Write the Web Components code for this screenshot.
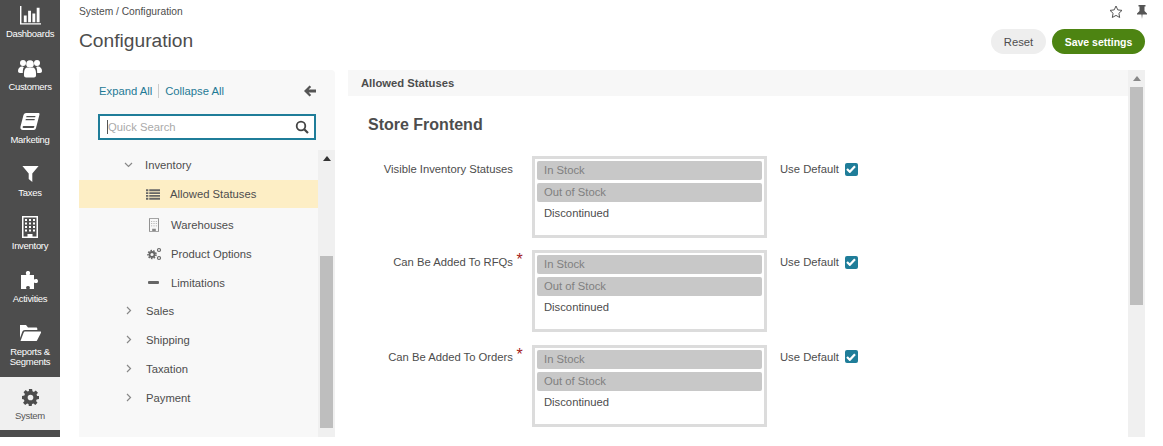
<!DOCTYPE html>
<html>
<head>
<meta charset="utf-8">
<title>Configuration</title>
<style>
  html, body { margin: 0; height: 446px; overflow: hidden; background: #fff; }
  body { font: 12px "Liberation Sans", Arial, sans-serif; color: #4d4d4d; }
</style>
</head>
<body>
<app-shell>
  <side-nav slot="nav">
    <nav-item><svg slot="icon" width="23" height="21" viewBox="0 0 24 22"><path fill="#fff" d="M1 1h1.500v18H23v1.500H1zM5 11h3v7H5zM9.500 6h3v12h-3zM14 9h3v9h-3zM18.500 3h3v15h-3z"/></svg>Dashboards</nav-item>
    <nav-item><svg slot="icon" width="24" height="20" viewBox="0 0 24 20"><g fill="#fff"><circle cx="5" cy="5" r="3"/><circle cx="19" cy="5" r="3"/><circle cx="12" cy="6" r="3.800"/><path d="M0 13c0-3 2-4.500 4-4.500 1 0 1.500.5 2 .5-.8 1-1.200 2.500-1.200 6H2c-1.200 0-2-.8-2-2zM24 13c0-3-2-4.500-4-4.500-1 0-1.500.5-2 .5.800 1 1.200 2.500 1.200 6H22c1.200 0 2-.8 2-2zM6 15c0-3.500 1.500-5.500 3.500-5.500 1 .7 4 .7 5 0 2 0 3.500 2 3.500 5.500v2.500c0 1-1 2-2 2H8c-1 0-2-1-2-2z"/></g></svg>Customers</nav-item>
    <nav-item><svg slot="icon" width="20" height="19" viewBox="0 0 20 19"><path fill="#fff" d="M6 1h12.500c.8 0 1.200.6 1 1.400L16 16c-.3 1.200-1 2-2.200 2H3c-2 0-3-1.500-2.500-3.500L3.500 3C4 1.800 5 1 6 1zM6.500 4l-.3 1.200h9L15.500 4zM5.800 7l-.3 1.200h9l.3-1.200zM3.500 14c-1 0-1.300 2 0 2h9.700c.5 0 .8-.4 1-1l.2-1z"/></svg>Marketing</nav-item>
    <nav-item><svg slot="icon" width="17" height="18" viewBox="0 0 18 20"><path fill="#fff" d="M0 1h18L11 9.500V19L7 15.500V9.500z"/></svg>Taxes</nav-item>
    <nav-item><svg slot="icon" width="16" height="22" viewBox="0 0 16 22"><path fill="#fff" fill-rule="evenodd" d="M0 0h16v22H0zM1.500 1.500v19h4V18h5v2.500h4v-19zM3 3h2v2H3zM7 3h2v2H7zM11 3h2v2h-2zM3 6.500h2v2H3zM7 6.500h2v2H7zM11 6.500h2v2h-2zM3 10h2v2H3zM7 10h2v2H7zM11 10h2v2h-2zM3 13.500h2v2H3zM7 13.500h2v2H7zM11 13.500h2v2h-2z"/></svg>Inventory</nav-item>
    <nav-item><svg slot="icon" width="20" height="20" viewBox="0 0 20 20"><path fill="#fff" d="M1 5h5.500C5.500 3.500 5.500 1 8 1s2.500 2.500 1.500 4H14v4.500c1.500-1 4-1 4 1.500s-2.500 2.500-4 1.500V19H9.500c.8-1.500.5-3-1.500-3s-2.300 1.500-1.500 3H1z"/></svg>Activities</nav-item>
    <nav-item tall><svg slot="icon" width="22" height="18" viewBox="0 0 22 18"><path fill="#fff" d="M1 1h6l2 2.500h8c.8 0 1.300.5 1.300 1.200V6H6c-1.500 0-2.300.7-2.800 2L1 14zM6 7.500h15.500c.5 0 .8.400.6 1L18 16.500c-.2.400-.5.500-1 .5H1.500l3-8c.3-.8.800-1.500 1.500-1.500z"/></svg>Reports &amp;<br>Segments</nav-item>
    <nav-item active><svg slot="icon" width="17" height="17" viewBox="0 0 18 18"><path fill="#4d4d4d" fill-rule="evenodd" d="M7.300 0h3.400l.4 2.500 1.500.6 2-1.500 2.300 2.300-1.500 2 .6 1.500L18 7.300v3.400l-2.500.4-.6 1.500 1.500 2-2.300 2.300-2-1.500-1.500.6-.4 2.500H7.300l-.4-2.500-1.500-.6-2 1.500-2.300-2.300 1.500-2-.6-1.500L0 10.700V7.300l2.500-.4.6-1.500-1.500-2 2.300-2.300 2 1.500 1.500-.6zM9 6a3 3 0 1 0 0 6 3 3 0 0 0 0-6z"/></svg>System</nav-item>
  </side-nav>

  <page-header slot="header" crumb="System / Configuration" heading="Configuration"></page-header>

  <tree-panel slot="tree">
    <tree-node kind="open">Inventory</tree-node>
    <tree-node kind="leaf" selected>
      <svg slot="icon" style="margin-left:1px" width="14" height="11" viewBox="0 0 15 11"><path fill="#666" d="M0 0h2.500v2H0zM3.500 0H15v2H3.500zM0 3h2.500v2H0zM3.500 3H15v2H3.500zM0 6h2.500v2H0zM3.500 6H15v2H3.500zM0 9h2.500v2H0zM3.500 9H15v2H3.500z"/></svg>Allowed Statuses</tree-node>
    <tree-node kind="leaf">
      <svg slot="icon" style="margin-left:4px" width="10" height="14" viewBox="0 0 11 15"><path fill="#888" fill-rule="evenodd" d="M0 0h11v15H0zM1 1v13h2.500v-2.500h4V14H10V1zM2.500 3h1v1h-1zM5 3h1v1H5zM7.500 3h1v1h-1zM2.500 5.500h1v1h-1zM5 5.500h1v1H5zM7.500 5.500h1v1h-1zM2.500 8h1v1h-1zM5 8h1v1H5zM7.500 8h1v1h-1z"/></svg>Warehouses</tree-node>
    <tree-node kind="leaf">
      <svg slot="icon" style="margin-left:2px" width="15" height="14" viewBox="0 0 15 14"><g fill="none" stroke="#666"><circle cx="5" cy="7.500" r="2.500" stroke-width="1.800"/><circle cx="5" cy="7.500" r="4" stroke-width="1.500" stroke-dasharray="1.600 1.200"/><circle cx="12" cy="3" r="1.500" stroke-width="1.200"/><circle cx="12" cy="11" r="1.500" stroke-width="1.200"/></g></svg>Product Options</tree-node>
    <tree-node kind="leaf" tight>
      <svg slot="icon" style="margin-left:3px" width="11" height="3" viewBox="0 0 11 3"><rect width="11" height="3" rx="1" fill="#666"/></svg>Limitations</tree-node>
    <tree-node kind="closed">Sales</tree-node>
    <tree-node kind="closed">Shipping</tree-node>
    <tree-node kind="closed">Taxation</tree-node>
    <tree-node kind="closed">Payment</tree-node>
  </tree-panel>

  <settings-panel slot="panel" section="Allowed Statuses" heading="Store Frontend">
    <status-row label="Visible Inventory Statuses"></status-row>
    <status-row label="Can Be Added To RFQs" required></status-row>
    <status-row label="Can Be Added To Orders" required></status-row>
  </settings-panel>
</app-shell>

<script>
class AppShell extends HTMLElement {
  constructor() {
    super();
    this.attachShadow({mode: 'open'}).innerHTML = `<style>
      :host { display: grid; grid-template-columns: 60px 1fr; height: 446px; overflow: hidden; }
      .main { padding: 0 18px 0 19px; min-width: 0; }
      .content { display: flex; gap: 13px; height: 367px; }
    </style>
    <slot name="nav"></slot>
    <div class="main">
      <slot name="header"></slot>
      <div class="content">
        <slot name="tree"></slot>
        <slot name="panel"></slot>
      </div>
    </div>`;
  }
}

class SideNav extends HTMLElement {
  constructor() {
    super();
    this.attachShadow({mode: 'open'}).innerHTML = `<style>
      :host { display: block; height: 437px; background: #4d4d4d; overflow: hidden; }
      .list { margin-top: -5px; }
    </style>
    <div class="list"><slot></slot></div>`;
  }
}

class NavItem extends HTMLElement {
  constructor() {
    super();
    this.attachShadow({mode: 'open'}).innerHTML = `<style>
      :host { display: block; min-height: 53px; box-sizing: border-box; text-align: center;
        color: #fff; font-size: 9.500px; line-height: 10px; letter-spacing: -.3px; }
      :host([tall]) { min-height: 64px; }
      :host([active]) { background: #f0f0f0; color: #555; }
      .icon { display: flex; height: 22px; padding-top: 9px; margin-bottom: 3px; align-items: center; justify-content: center; }
    </style>
    <div class="icon"><slot name="icon"></slot></div>
    <slot></slot>`;
  }
}

class PageHeader extends HTMLElement {
  constructor() {
    super();
    this.attachShadow({mode: 'open'}).innerHTML = `<style>
      :host { display: flex; justify-content: space-between; height: 70px; }
      .crumb { font-size: 10.250px; line-height: 12px; padding-top: 6px; color: #4d4d4d; }
      h1 { margin: 14px 0 0; font-size: 19.200px; line-height: 18px; font-weight: normal; color: #4d4d4d; }
      .side { display: flex; flex-direction: column; align-items: flex-end; }
      .tools { display: flex; gap: 14px; height: 17px; padding-top: 3px; margin: 0 -2px 9px 0; align-items: center; }
      .buttons { display: flex; gap: 6px; }
      button { border: 0; height: 25px; border-radius: 13px; font: 11.250px "Liberation Sans", Arial, sans-serif; padding: 0; }
      .reset { width: 55px; background: #eee; color: #4d4d4d; }
      .save { width: 93px; background: #4d8412; color: #fff; font-weight: bold; font-size: 10.500px; }
    </style>
    <div>
      <div class="crumb">${this.getAttribute('crumb')}</div>
      <h1>${this.getAttribute('heading')}</h1>
    </div>
    <div class="side">
      <div class="tools">
        <svg width="14" height="14" viewBox="0 0 14 14"><path fill="none" stroke="#555" d="M7 1l1.800 3.900 4.200.5-3.100 2.900.8 4.200L7 10.400 3.300 12.500l.8-4.200L1 5.400l4.200-.5z"/></svg>
        <svg width="10" height="14" viewBox="0 0 10 14"><path fill="#555" d="M1.500 0h7v1.500H7.500V6L10 8.500V9.500H5.500L5 14l-.5-4.500H0V8.500L2.500 6V1.500h-1z"/></svg>
      </div>
      <div class="buttons">
        <button class="reset">Reset</button>
        <button class="save">Save settings</button>
      </div>
    </div>`;
  }
}

class FakeScrollbar extends HTMLElement {
  constructor() {
    super();
    const top = this.getAttribute('thumb-top');
    const height = this.getAttribute('thumb-height');
    this.attachShadow({mode: 'open'}).innerHTML = `<style>
      :host { display: block; width: 17px; flex: none; background: #f0f0f0; }
      .arrow { width: 0; margin: 6px auto 0; border: 4px solid transparent; border-top: 0; border-bottom: 5px solid ${this.getAttribute('arrow') || '#333'}; }
      .thumb { width: 13px; margin: 0 2px; background: #bebebe; }
    </style>
    <div class="arrow"></div>
    <div class="thumb" style="margin-top:${top}px;height:${height}px"></div>`;
  }
}

class TreePanel extends HTMLElement {
  constructor() {
    super();
    this.attachShadow({mode: 'open'}).innerHTML = `<style>
      :host { display: flex; flex-direction: column; width: 256px; flex: none; height: 367px;
        background: #f8f8f8; border-radius: 4px 4px 0 0; }
      .top { padding: 14px 19px 0 19px; height: 66px; }
      .links { display: flex; align-items: center; height: 14px; padding-left: 1px; color: #1f7a96; font-size: 11.250px; }
      .links i { width: 1px; height: 14px; background: #ccc; margin: 0 6px; }
      .links svg { margin-left: auto; }
      .search { display: flex; align-items: center; height: 22px; margin-top: 16px; border: 2px solid #1f7d99;
        background: #fff; padding: 0 5px 0 7px; color: #aaa; font-size: 11.250px; }
      .search span { border-left: 1px solid #555; line-height: 14px; flex: 1; }
      .body { display: flex; flex: 1; min-height: 0; }
      .rows { flex: 1; }
    </style>
    <div class="top">
      <div class="links">Expand All<i></i>Collapse All
        <svg width="12" height="12" viewBox="0 0 13 12"><path fill="#555" d="M6 0l1.800 1.800L5 4.500h8v3H5l2.800 2.700L6 12 0 6z"/></svg>
      </div>
      <div class="search"><span>Quick Search</span>
        <svg width="14" height="14" viewBox="0 0 14 14"><circle cx="6" cy="6" r="4.300" fill="none" stroke="#444" stroke-width="1.800"/><path stroke="#444" stroke-width="2.200" d="M9.200 9.200L13 13"/></svg>
      </div>
    </div>
    <div class="body">
      <div class="rows"><slot></slot></div>
      <fake-scrollbar thumb-top="95" thumb-height="172"></fake-scrollbar>
    </div>`;
  }
}

class TreeNode extends HTMLElement {
  constructor() {
    super();
    const kind = this.getAttribute('kind');
    const chevron = kind == 'open'
      ? '<svg width="9" height="6" viewBox="0 0 9 6"><path fill="none" stroke="#888" stroke-width="1.200" d="M1 1l3.500 3.500L8 1"/></svg>'
      : '<svg width="6" height="9" viewBox="0 0 6 9"><path fill="none" stroke="#888" stroke-width="1.200" d="M1 1l3.500 3.500L1 8"/></svg>';
    this.attachShadow({mode: 'open'}).innerHTML = `<style>
      :host { display: flex; align-items: center; height: 29px; color: #4d4d4d; font-size: 11.250px; }
      :host([kind="open"]) { padding-left: 45px; }
      :host([kind="closed"]) { padding-left: 47px; }
      :host([kind="leaf"]) { padding-left: 66px; }
      :host([selected]) { background: #fdeec5; height: 28px; margin-top: 1px; margin-bottom: 2px; }
      :host([tight]) { margin-bottom: -1px; }
      .mark { display: flex; align-items: center; justify-content: flex-start; }
      :host([kind="open"]) .mark { width: 21px; }
      :host([kind="closed"]) .mark { width: 20px; }
      :host([kind="leaf"]) .mark { width: 26px; }
      :host([selected]) .mark { width: 25px; }
    </style>
    <span class="mark">${kind == 'leaf' ? '<slot name="icon"></slot>' : chevron}</span>
    <span><slot></slot></span>`;
  }
}

class SettingsPanel extends HTMLElement {
  constructor() {
    super();
    this.attachShadow({mode: 'open'}).innerHTML = `<style>
      :host { display: flex; flex: 1; min-width: 0; height: 367px; overflow: hidden; }
      .inner { flex: 1; min-width: 0; }
      .section { height: 26px; line-height: 26px; padding-left: 13px; background: #f7f7f7; font-weight: bold; font-size: 11.250px; color: #4d4d4d; }
      h2 { margin: 0; padding: 19px 0 0 20px; height: 41px; font-size: 16px; line-height: 20px; color: #4d4d4d; }
      .rows { display: flex; flex-direction: column; gap: 12.400px; }
    </style>
    <div class="inner">
      <div class="section">${this.getAttribute('section')}</div>
      <h2>${this.getAttribute('heading')}</h2>
      <div class="rows"><slot></slot></div>
    </div>
    <fake-scrollbar thumb-top="6" thumb-height="218" arrow="#888"></fake-scrollbar>`;
  }
}

class StatusRow extends HTMLElement {
  constructor() {
    super();
    const required = this.hasAttribute('required');
    this.attachShadow({mode: 'open'}).innerHTML = `<style>
      :host { display: flex; height: 82px; font-size: 11.250px; color: #4d4d4d; }
      .label { width: 165px; text-align: right; padding-top: 6px; line-height: 14px; position: relative; flex: none; }
      :host([required]) .label { padding-top: 5px; }
      .star { position: absolute; left: 168.500px; top: 3px; color: #a51c1c; font-size: 16px; }
      .select { width: 235px; box-sizing: border-box; margin-left: 19px; border: 3px solid #dcdcdc; padding: 2px; flex: none; }
      .option { height: 19px; line-height: 19px; padding-left: 7px; margin-bottom: 3px; border-radius: 2px; }
      .option:last-child { margin-top: -1px; }
      .on { background: #c8c8c8; color: #808080; }
      .default { display: flex; align-items: center; height: 14px; margin: 6px 0 0 13px; gap: 6px; }
      :host([required]) .default { margin-top: 5px; }
      .check { width: 13px; height: 13px; border-radius: 2px; background: #1f7d99; display: flex; align-items: center; justify-content: center; }
    </style>
    <div class="label">${this.getAttribute('label')}${required ? '<span class="star">*</span>' : ''}</div>
    <div class="select">
      <div class="option on">In Stock</div>
      <div class="option on">Out of Stock</div>
      <div class="option">Discontinued</div>
    </div>
    <div class="default">Use Default
      <span class="check"><svg width="10" height="8" viewBox="0 0 10 8"><path fill="none" stroke="#fff" stroke-width="2.200" d="M1 4l2.800 2.800L9 1.200"/></svg></span>
    </div>`;
  }
}

customElements.define('app-shell', AppShell);
customElements.define('side-nav', SideNav);
customElements.define('nav-item', NavItem);
customElements.define('page-header', PageHeader);
customElements.define('fake-scrollbar', FakeScrollbar);
customElements.define('tree-panel', TreePanel);
customElements.define('tree-node', TreeNode);
customElements.define('settings-panel', SettingsPanel);
customElements.define('status-row', StatusRow);
</script>
</body>
</html>
